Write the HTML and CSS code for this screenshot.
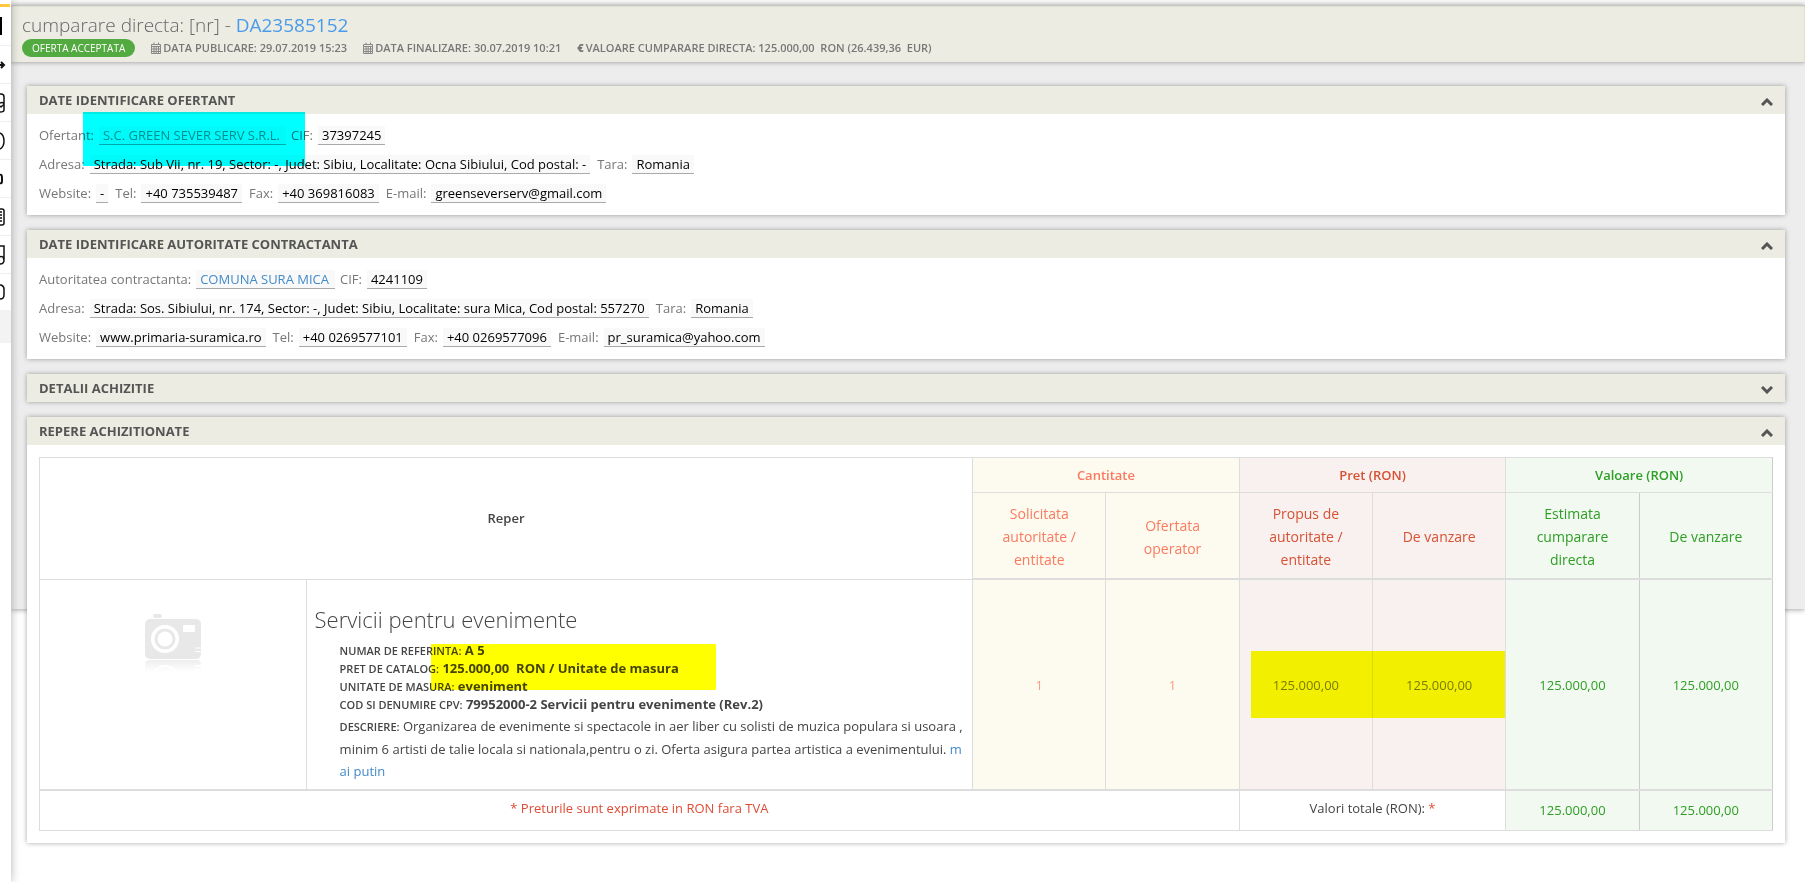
FILE: index.html
```html
<!DOCTYPE html>
<html lang="ro">
<head>
    <meta charset="UTF-8">
    <meta name="viewport" content="width=device-width, initial-scale=1.0">
    <title>Cumparare directa DA23585152</title>
    <link rel="stylesheet" href="styles.css">
</head>
<body>

    <div class="layout">
        <nav class="sidebar">
            <div class="accent"></div>
            <div class="side-item first"><svg width="11" height="20" viewBox="0 0 11 20"><path d="M0 1h2v18H0z" fill="#000"/></svg></div>
            <div class="side-item"><svg width="11" height="20" viewBox="0 0 11 20"><path d="M0 10h3M1 7l3 3-3 3" class="ink"/></svg></div>
            <div class="side-item"><svg width="11" height="20" viewBox="0 0 11 20"><path d="M0 1h1q3 0 3 3v13q0 2-4 2M0 10q4-2 4 3M0 13l1 1 2-2" class="ink thin"/></svg></div>
            <div class="side-item"><svg width="11" height="20" viewBox="0 0 11 20"><path d="M0 2q4 2 4 8t-4 8" class="ink thin"/></svg></div>
            <div class="side-item"><svg width="11" height="20" viewBox="0 0 11 20"><path d="M0 6q2-1 2 3v3q0 3-2 2" class="ink"/></svg></div>
            <div class="side-item"><svg width="11" height="20" viewBox="0 0 11 20"><path d="M0 2h2q2 0 2 2v12q0 2-2 2H0M0 5h2M0 8h2M0 11h2M0 14h2" class="ink thin"/></svg></div>
            <div class="side-item"><svg width="11" height="20" viewBox="0 0 11 20"><path d="M0 1h4v14q0 4-4 4M0 12q3-2 4 3" class="ink thin"/></svg></div>
            <div class="side-item last"><svg width="11" height="20" viewBox="0 0 11 20"><path d="M0 3h1q3 1 3 4v6q0 4-4 4" class="ink thin"/></svg></div>
            <div class="side-current"></div>
        </nav>

        <main class="page">
            <div class="topbar"></div>
            <header class="page-header">
                <h1>cumparare directa: [nr] - <a href="#">DA23585152</a></h1>
                <div class="meta">
                    <span class="badge">OFERTA ACCEPTATA</span>
                    <span class="meta-item"><svg class="calendar" width="10" height="12" viewBox="0 0 10 12"><path d="M.5 2.5h9v9h-9zM.5 4.5h9M.5 7h9M.5 9.5h9M3 4.5v7M5.2 4.5v7M7.5 4.5v7M3 .5v2M7.5 .5v2"/></svg>DATA PUBLICARE: 29.07.2019 15:23</span>
                    <span class="meta-item"><svg class="calendar" width="10" height="12" viewBox="0 0 10 12"><path d="M.5 2.5h9v9h-9zM.5 4.5h9M.5 7h9M.5 9.5h9M3 4.5v7M5.2 4.5v7M7.5 4.5v7M3 .5v2M7.5 .5v2"/></svg>DATA FINALIZARE: 30.07.2019 10:21</span>
                    <span class="meta-item"><b>€</b>VALOARE CUMPARARE DIRECTA: 125.000,00&nbsp; RON (26.439,36&nbsp; EUR)</span>
                </div>
            </header>

            <div class="content">
                <section class="panel">
                    <div class="panel-head">
                        <h2>DATE IDENTIFICARE OFERTANT</h2>
                        <button class="toggle" type="button" aria-label="Restrange"><svg width="12" height="8" viewBox="0 0 12 8"><path d="M1 7l5-5 5 5"/></svg></button>
                    </div>
                    <div class="panel-body">
                        <div class="row">
                            <span class="label">Ofertant:</span><span class="value linked"><a class="marked" href="#">S.C. GREEN SEVER SERV S.R.L.</a></span>
                            <span class="label">CIF:</span><span class="value">37397245</span>
                        </div>
                        <div class="row">
                            <span class="label">Adresa:</span><span class="value">Strada: Sub Vii, nr. 19, Sector: -, Judet: Sibiu, Localitate: Ocna Sibiului, Cod postal: -</span>
                            <span class="label">Tara:</span><span class="value">Romania</span>
                        </div>
                        <div class="row">
                            <span class="label">Website:</span><span class="value">-</span>
                            <span class="label">Tel:</span><span class="value">+40 735539487</span>
                            <span class="label">Fax:</span><span class="value">+40 369816083</span>
                            <span class="label">E-mail:</span><span class="value">greenseverserv@gmail.com</span>
                        </div>
                    </div>
                    <div class="marker marker-cyan"></div>
                </section>

                <section class="panel">
                    <div class="panel-head">
                        <h2>DATE IDENTIFICARE AUTORITATE CONTRACTANTA</h2>
                        <button class="toggle" type="button" aria-label="Restrange"><svg width="12" height="8" viewBox="0 0 12 8"><path d="M1 7l5-5 5 5"/></svg></button>
                    </div>
                    <div class="panel-body">
                        <div class="row">
                            <span class="label">Autoritatea contractanta:</span><span class="value linked"><a href="#">COMUNA SURA MICA</a></span>
                            <span class="label">CIF:</span><span class="value">4241109</span>
                        </div>
                        <div class="row">
                            <span class="label">Adresa:</span><span class="value">Strada: Sos. Sibiului, nr. 174, Sector: -, Judet: Sibiu, Localitate: sura Mica, Cod postal: 557270</span>
                            <span class="label">Tara:</span><span class="value">Romania</span>
                        </div>
                        <div class="row">
                            <span class="label">Website:</span><span class="value">www.primaria-suramica.ro</span>
                            <span class="label">Tel:</span><span class="value">+40 0269577101</span>
                            <span class="label">Fax:</span><span class="value">+40 0269577096</span>
                            <span class="label">E-mail:</span><span class="value">pr_suramica@yahoo.com</span>
                        </div>
                    </div>
                </section>

                <section class="panel">
                    <div class="panel-head">
                        <h2>DETALII ACHIZITIE</h2>
                        <button class="toggle" type="button" aria-label="Extinde"><svg width="12" height="8" viewBox="0 0 12 8"><path d="M1 1l5 5 5-5"/></svg></button>
                    </div>
                </section>

                <section class="panel">
                    <div class="panel-head">
                        <h2>REPERE ACHIZITIONATE</h2>
                        <button class="toggle" type="button" aria-label="Restrange"><svg width="12" height="8" viewBox="0 0 12 8"><path d="M1 7l5-5 5 5"/></svg></button>
                    </div>
                    <div class="panel-body">
                        <table class="items">
                            <colgroup>
                                <col class="col-image"><col class="col-item"><col><col><col><col><col><col>
                            </colgroup>
                            <thead>
                                <tr class="groups">
                                    <th colspan="2" rowspan="2">Reper</th>
                                    <th colspan="2" class="qty">Cantitate</th>
                                    <th colspan="2" class="price">Pret (RON)</th>
                                    <th colspan="2" class="total">Valoare (RON)</th>
                                </tr>
                                <tr class="subs">
                                    <th class="qty">Solicitata autoritate / entitate</th>
                                    <th class="qty">Ofertata operator</th>
                                    <th class="price">Propus de autoritate / entitate</th>
                                    <th class="price">De vanzare</th>
                                    <th class="total">Estimata cumparare directa</th>
                                    <th class="total">De vanzare</th>
                                </tr>
                            </thead>
                            <tbody>
                                <tr class="item">
                                    <td class="picture">
                                        <svg width="56" height="58" viewBox="0 0 56 58">
                                            <defs>
                                                <linearGradient id="fade" x1="0" y1="0" x2="0" y2="1">
                                                    <stop offset="0" stop-color="#eee"/>
                                                    <stop offset="1" stop-color="#fff"/>
                                                </linearGradient>
                                            </defs>
                                            <rect x="8" y="0" width="9" height="4" rx="2" fill="#e8e8e8"/>
                                            <rect x="0" y="5" width="56" height="40" rx="5" fill="#e8e8e8"/>
                                            <circle cx="20" cy="25" r="14" fill="#fff"/>
                                            <circle cx="20" cy="25" r="9" fill="#fff" stroke="#e8e8e8" stroke-width="3"/>
                                            <rect x="38" y="11" width="12" height="7" rx="1" fill="#fff"/>
                                            <path d="M50 34h6M50 37.5h6" stroke="#fff"/>
                                            <path d="M0 58V50q0-4 5-4h46q5 0 5 4v8z" fill="url(#fade)"/>
                                            <path d="M9 57q11-10 22 0M50 52h6M50 56h6" fill="none" stroke="#fff" stroke-width="2"/>
                                        </svg>
                                    </td>
                                    <td class="details">
                                        <h3>Servicii pentru evenimente</h3>
                                        <ul>
                                            <li><span>NUMAR DE REFERINTA:</span> <b>A 5</b></li>
                                            <li><span>PRET DE CATALOG:</span> <b>125.000,00&nbsp; RON / Unitate de masura</b></li>
                                            <li><span>UNITATE DE MASURA:</span> <b>eveniment</b></li>
                                            <li><span>COD SI DENUMIRE CPV:</span> <b>79952000-2 Servicii pentru evenimente (Rev.2)</b></li>
                                            <li class="description"><span>DESCRIERE:</span> Organizarea de evenimente si spectacole in aer liber cu solisti de muzica populara si usoara ,minim 6 artisti de talie locala si nationala,pentru o zi. Oferta asigura partea artistica a evenimentului. <a href="#">mai putin</a></li>
                                        </ul>
                                        <div class="marker marker-details"></div>
                                    </td>
                                    <td class="qty faint">1</td>
                                    <td class="qty faint">1</td>
                                    <td class="price marked-cell first">125.000,00<div class="marker marker-price"></div></td>
                                    <td class="price marked-cell">125.000,00</td>
                                    <td class="total">125.000,00</td>
                                    <td class="total">125.000,00</td>
                                </tr>
                            </tbody>
                            <tfoot>
                                <tr>
                                    <td colspan="4" class="note">* Preturile sunt exprimate in RON fara TVA</td>
                                    <td colspan="2" class="sum-label">Valori totale (RON): <span class="star">*</span></td>
                                    <td class="total">125.000,00</td>
                                    <td class="total">125.000,00</td>
                                </tr>
                            </tfoot>
                        </table>
                    </div>
                </section>
            </div>
        </main>
    </div>

</body>
</html>
```
FILE: styles.css
```css
* {
    box-sizing: border-box;
}
body {
    margin: 0;
    background: #fff;
    color: #444;
    font-family: "Open Sans", "Noto Sans", sans-serif;
    font-size: 13px;
}
a {
    color: #428bca;
    text-decoration: none;
}
h1, h2, h3, ul {
    margin: 0;
    padding: 0;
}
.layout {
    display: flex;
    height: 100vh;
}

/* cut-off side menu */
.sidebar {
    position: relative;
    z-index: 2;
    flex: 0 0 11px;
    padding-top: 4px;
    background: #fff;
    box-shadow: 0 0 10px rgba(0, 0, 0, 0.3);
}
.accent {
    width: 10px;
    height: 3px;
    background: #ffc83d;
}
.side-item {
    display: flex;
    align-items: center;
    height: 38px;
    border-bottom: 1px solid #eee;
}
.side-item.first { height: 39px; }
.side-item.last { height: 36px; border-bottom: none; }
.side-current {
    height: 33px;
    background: #f3f3f3;
}
.ink {
    fill: none;
    stroke: #111;
    stroke-width: 2;
}
.ink.thin { stroke-width: 1.5; }

/* the grey backdrop ends above the bottom of the window */
.page {
    flex: 1;
    min-width: 0;
    height: calc(100vh - 273px);
    background: #ededed;
    box-shadow: 0 1px 5px rgba(0, 0, 0, 0.35);
}
.topbar {
    height: 5px;
    background: #fafafa;
}
.page-header {
    height: 57px;
    padding: 8px 11px 0;
    background: #ecece3;
    box-shadow: 0 0 5px rgba(0, 0, 0, 0.4), inset 0 1px 2px rgba(0, 0, 0, 0.2);
}
h1 {
    color: #666;
    font-size: 19px;
    font-weight: 300;
    line-height: 25px;
}
h1 a {
    color: #4a9bea;
    font-weight: 400;
}
.meta {
    display: flex;
    align-items: center;
    gap: 16px;
    color: #777;
    font-size: 11px;
    font-weight: 600;
    line-height: 18px;
}
.badge {
    padding: 0 10px;
    border-radius: 9px;
    background: #52aa40;
    color: #fff;
    font-size: 10px;
    font-weight: 400;
}
.meta-item {
    display: flex;
    align-items: center;
    gap: 2px;
    padding-top: 1px;
}
.calendar {
    fill: none;
    stroke: #888;
}

.content {
    display: flex;
    flex-direction: column;
    gap: 15px;
    padding: 24px 20px 0 16px;
}
.panel {
    position: relative;
    background: #fff;
    box-shadow: 0 0 5px rgba(0, 0, 0, 0.35);
}
.panel-head {
    display: flex;
    align-items: center;
    justify-content: space-between;
    height: 28px;
    padding: 0 12px;
    background: #ecece3;
}
h2 {
    color: #555;
    font-size: 13px;
    font-weight: 700;
}
.toggle {
    display: flex;
    padding: 4px 0 0;
    border: none;
    background: none;
    cursor: pointer;
}
.toggle path {
    fill: none;
    stroke: #555;
    stroke-width: 3;
}
.panel-body {
    padding: 12px;
}
.row {
    display: flex;
    line-height: 18px;
}
.row + .row {
    margin-top: 10px;
}
.label {
    margin-right: 5px;
    color: #777;
}
.value {
    margin-right: 7px;
    padding: 0 4px;
    border-bottom: 1px solid #aaa;
    background: #f9f9f9;
    color: #000;
}
.value.linked {
    margin-right: 5px;
    padding-right: 6px;
}
.value .marked { color: #4d8f8f; }

/* highlighter strokes */
.marker {
    position: absolute;
    z-index: 1;
    mix-blend-mode: multiply;
    pointer-events: none;
}
.marker-cyan {
    left: 56px;
    top: 26px;
    width: 222px;
    height: 54px;
    background: #0ff;
}
.marker-details {
    left: 124px;
    top: 64px;
    width: 285px;
    height: 46px;
    background: #ff0;
}
.marker-price {
    left: 11px;
    top: 71px;
    width: calc(200% - 10px);
    height: 67px;
    background: #f8ff00;
}

.items {
    width: 100%;
    border-collapse: collapse;
    table-layout: fixed;
    text-align: center;
}
.col-image { width: calc(100% * 2 / 13); }
.col-item { width: calc(100% * 5 / 13); }
.items th, .items td {
    padding: 8px;
    border: 1px solid #ddd;
}
.items th { font-weight: 600; }
.groups th { height: 35px; padding: 0; }
.items .subs th {
    height: 86px;
    padding: 9px 20px 7px;
    border-bottom-width: 2px;
    font-size: 14px;
    font-weight: 400;
    line-height: 23px;
}
.items .qty { background: #fdfbf0; color: #fa7a5f; }
.items .price { background: #f9f0f0; color: #d65233; }
.items .total { background: #f2f9f1; color: #2e9e25; border-right-color: #ccc; }
.items .faint { color: #fa9a86; }
.items .item td {
    height: 211px;
    border-bottom-width: 2px;
}
.items .item .picture {
    padding-top: 34px;
    vertical-align: top;
}
.items .item .details {
    position: relative;
    padding: 22px 8px 0;
    text-align: left;
    vertical-align: top;
}
.items .marked-cell { color: #7c7c7c; }
.items .marked-cell.first { position: relative; }
h3 {
    color: #444;
    font-size: 22px;
    font-weight: 300;
    line-height: 34px;
}
.details ul {
    padding: 5px 0 0 25px;
    list-style: none;
}
.details li {
    height: 18px;
    line-height: 18px;
}
.details li span {
    font-size: 11px;
    font-weight: 600;
}
.details .description {
    height: auto;
    margin-top: 2px;
    line-height: 22px;
    word-break: break-all;
}
.items tfoot td {
    height: 40px;
    padding: 0 8px;
}
.items tfoot .note, .items tfoot .sum-label { padding-bottom: 4px; }
.items .note, .star { color: #e04b35; }
```
